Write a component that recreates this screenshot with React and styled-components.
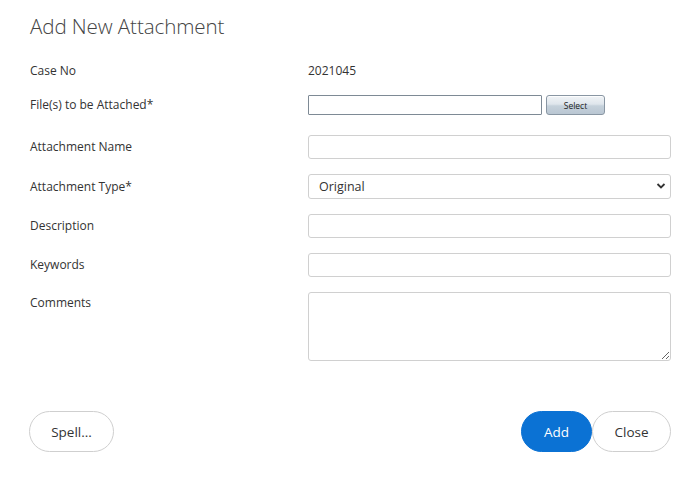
import React from "react";
import styled, { createGlobalStyle } from "styled-components";

const Global = createGlobalStyle`
  html, body { margin: 0; padding: 0; background: #fff; }
  body { font-family: "Open Sans", "Noto Sans", sans-serif; color: #333; }
  * { box-sizing: border-box; }
`;

const Page = styled.div`
  width: 700px;
  height: 480px;
  padding: 12px 29px 0 30px;
  display: flex;
  flex-direction: column;
`;

const Title = styled.h1`
  margin: 0;
  font-family: "Open Sans", sans-serif;
  font-weight: 300;
  font-size: 20.6px;
  line-height: 28px;
  color: #444;
  letter-spacing: -0.1px;
`;

const Form = styled.div`
  display: flex;
  flex-direction: column;
  margin-top: 21px;
`;

const Row = styled.div`
  display: grid;
  grid-template-columns: 278px 1fr;
  align-items: ${(p) => (p.$top ? "start" : "center")};
  min-height: ${(p) => p.$h || 24}px;
  margin-top: ${(p) => p.$gap || 0}px;
`;

const Label = styled.div`
  font-size: 12px;
  line-height: 16px;
  color: #333;
  padding-top: ${(p) => p.$pad || 0}px;
`;

const Value = styled.div`
  font-size: 12px;
  line-height: 16px;
  color: #333;
`;

const FileLine = styled.div`
  display: flex;
  align-items: center;
  gap: 4px;
`;

const FileBox = styled.input`
  width: 234px;
  height: 20px;
  border: 1px solid #7e8a95;
  border-radius: 1px;
  background: #fff;
  padding: 0 4px;
  font: inherit;
  outline: none;
`;

const SelectButton = styled.button`
  width: 59px;
  height: 20px;
  border: 1px solid #8996a3;
  border-radius: 3px;
  background: linear-gradient(#f1f4f7 0%, #dfe6ec 45%, #c5d1db 55%, #b9c6d2 100%);
  font-family: "Open Sans", sans-serif;
  font-size: 8.5px;
  color: #222;
  padding: 0;
  box-shadow: inset 0 1px 0 rgba(255, 255, 255, 0.8);
`;

const TextBox = styled.input`
  width: 100%;
  height: 24px;
  border: 1px solid #d0d0d0;
  border-radius: 3px;
  background: #fff;
  padding: 0 10px;
  font-family: "Open Sans", sans-serif;
  font-size: 12px;
  color: #333;
  outline: none;
`;

const SelectWrap = styled.div`
  position: relative;
  width: 100%;
`;

const Dropdown = styled.select`
  appearance: none;
  width: 100%;
  height: 25px;
  border: 1px solid #d0d0d0;
  border-radius: 3px;
  background: #fff;
  padding: 0 10px;
  font-family: "Open Sans", sans-serif;
  font-size: 12.5px;
  color: #333;
  outline: none;
`;

const Chevron = styled.svg`
  position: absolute;
  right: 5px;
  top: 8px;
  width: 10px;
  height: 8px;
  pointer-events: none;
`;

const TextArea = styled.textarea`
  width: 100%;
  height: 69px;
  border: 1px solid #d0d0d0;
  border-radius: 3px;
  background: #fff;
  font-family: "Open Sans", sans-serif;
  font-size: 12px;
  padding: 4px 10px;
  outline: none;
  resize: vertical;
  display: block;
`;

const Footer = styled.div`
  display: flex;
  align-items: center;
  justify-content: space-between;
  margin-top: 50px;
  margin-left: -1px;
`;

const Group = styled.div`
  display: flex;
`;

const Pill = styled.button`
  height: 41px;
  min-width: ${(p) => p.$w}px;
  padding: 0 16px;
  border-radius: 21px;
  border: 1px solid ${(p) => (p.$primary ? "#0b72d4" : "#cfcfcf")};
  background: ${(p) => (p.$primary ? "#0b72d4" : "#fff")};
  color: ${(p) => (p.$primary ? "#fff" : "#333")};
  font-family: "Open Sans", sans-serif;
  font-size: 13.5px;
`;

export default function App() {
  return (
    <Page>
      <Global />
      <Title>Add New Attachment</Title>
      <Form>
        <Row $h={20}>
          <Label>Case No</Label>
          <Value>2021045</Value>
        </Row>
        <Row $h={20} $gap={14}>
          <Label>File(s) to be Attached*</Label>
          <FileLine>
            <FileBox type="text" readOnly />
            <SelectButton type="button">Select</SelectButton>
          </FileLine>
        </Row>
        <Row $gap={20}>
          <Label>Attachment Name</Label>
          <TextBox type="text" />
        </Row>
        <Row $h={25} $gap={15}>
          <Label>Attachment Type*</Label>
          <SelectWrap>
            <Dropdown defaultValue="Original">
              <option>Original</option>
              <option>Copy</option>
            </Dropdown>
            <Chevron viewBox="0 0 10 8">
              <path d="M1.5 2 L5 5.5 L8.5 2" fill="none" stroke="#333" strokeWidth="1.8" />
            </Chevron>
          </SelectWrap>
        </Row>
        <Row $gap={15}>
          <Label>Description</Label>
          <TextBox type="text" />
        </Row>
        <Row $gap={15}>
          <Label>Keywords</Label>
          <TextBox type="text" />
        </Row>
        <Row $h={69} $gap={15} $top>
          <Label $pad={3}>Comments</Label>
          <TextArea />
        </Row>
      </Form>
      <Footer>
        <Pill $w={85}>Spell...</Pill>
        <Group>
          <Pill $w={71} $primary>Add</Pill>
          <Pill $w={79}>Close</Pill>
        </Group>
      </Footer>
    </Page>
  );
}
